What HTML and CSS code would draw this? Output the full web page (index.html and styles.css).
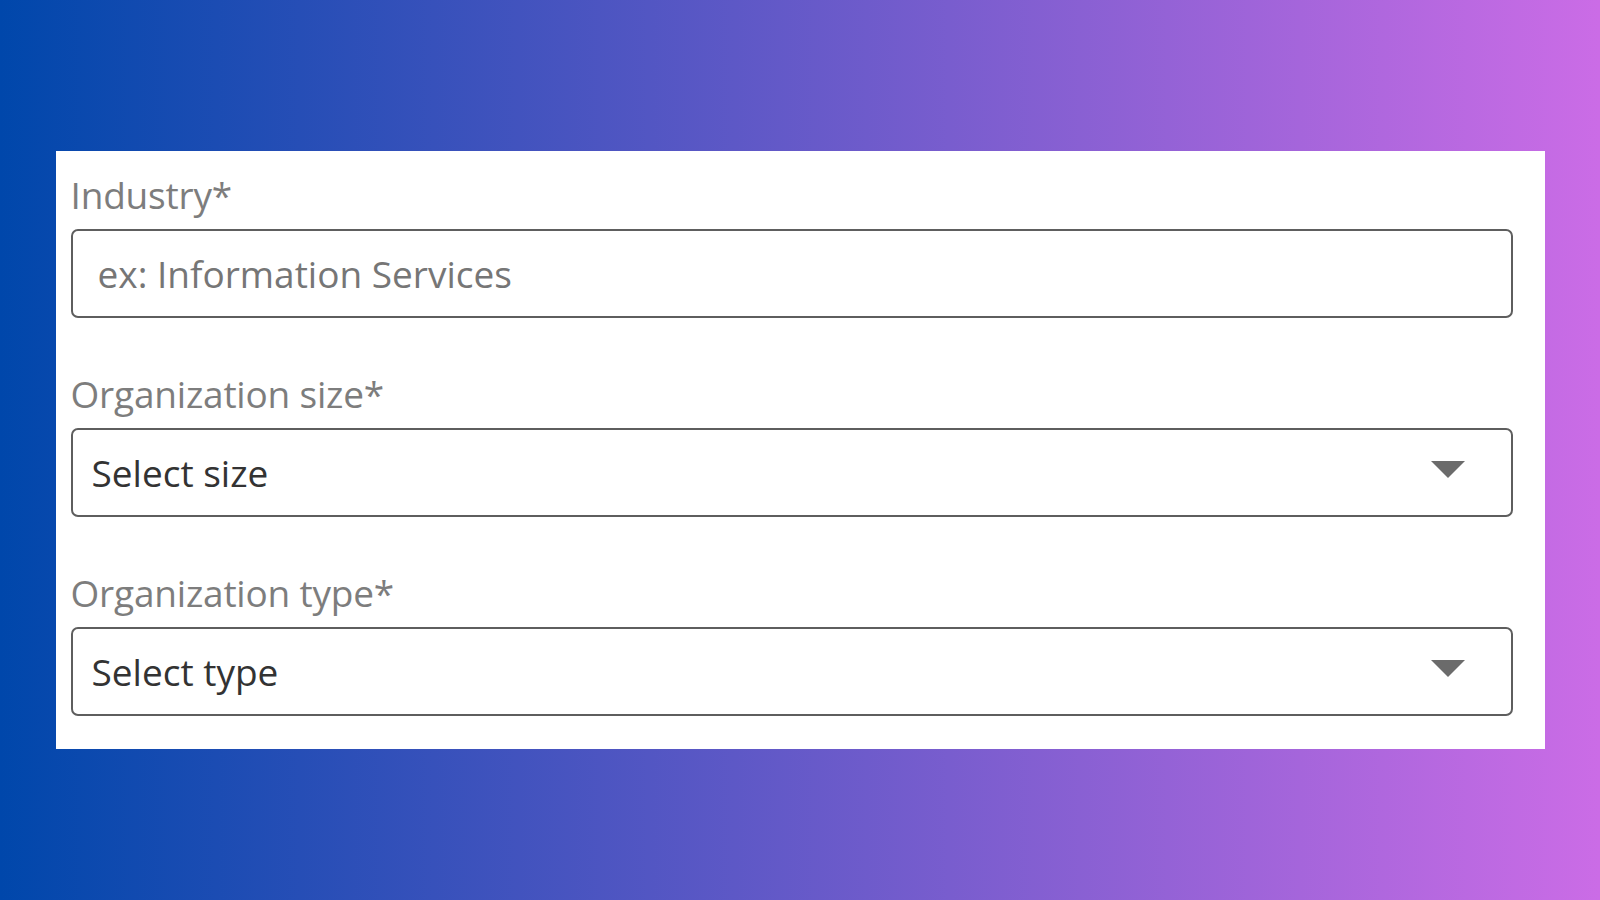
FILE: index.html
```html
<!DOCTYPE html>
<html lang="en">
<head>
    <meta charset="UTF-8">
    <meta name="viewport" content="width=device-width, initial-scale=1.0">
    <title>Organization Details</title>
    <link rel="stylesheet" href="styles.css">
</head>
<body>
    <div class="card">
        <div class="field">
            <label class="label" for="industry">Industry*</label>
            <input class="box text-input" type="text" id="industry" placeholder="ex: Information Services">
        </div>

        <div class="field">
            <label class="label" for="orgSize">Organization size*</label>
            <div class="select-wrap">
                <select class="box select" id="orgSize">
                    <option value="">Select size</option>
                    <option value="1">1-10 employees</option>
                    <option value="2">11-50 employees</option>
                    <option value="3">51-200 employees</option>
                </select>
                <svg class="arrow" width="34" height="17" viewBox="0 0 34 17"><path d="M0 0H34L17 17Z" fill="#6b6b6b"/></svg>
            </div>
        </div>

        <div class="field">
            <label class="label" for="orgType">Organization type*</label>
            <div class="select-wrap">
                <select class="box select" id="orgType">
                    <option value="">Select type</option>
                    <option value="public">Public company</option>
                    <option value="private">Privately held</option>
                    <option value="nonprofit">Nonprofit</option>
                </select>
                <svg class="arrow" width="34" height="17" viewBox="0 0 34 17"><path d="M0 0H34L17 17Z" fill="#6b6b6b"/></svg>
            </div>
        </div>
    </div>
</body>
</html>
```

FILE: styles.css
```css
body {
    margin: 0;
    height: 100vh;
    display: flex;
    justify-content: center;
    align-items: center;
    font-family: "Open Sans", "Noto Sans", sans-serif;
    background: linear-gradient(to right, #0047ab, #cb6ce6);
}
.card {
    width: 1489px;
    box-sizing: border-box;
    background: #fff;
    padding: 20px 32px 33px 15px;
    display: flex;
    flex-direction: column;
    gap: 52px;
}
.field {
    display: flex;
    flex-direction: column;
}
.label {
    font-size: 37px;
    line-height: 48px;
    color: #7d7d7d;
    letter-spacing: -0.2px;
    margin-bottom: 10px;
}
.box {
    width: 100%;
    height: 89px;
    box-sizing: border-box;
    border: 2px solid #5e5e5e;
    border-radius: 7px;
    background: #fff;
    font-family: inherit;
    font-size: 37px;
    margin: 0;
    outline: none;
}
.text-input {
    padding: 0 0 0 25px;
    color: #333;
}
.text-input::placeholder {
    color: #767676;
}
.select-wrap {
    position: relative;
}
.select {
    appearance: none;
    -webkit-appearance: none;
    padding: 0 80px 0 19px;
    color: #333;
}
.arrow {
    position: absolute;
    right: 48px;
    top: 33px;
    pointer-events: none;
}
```
